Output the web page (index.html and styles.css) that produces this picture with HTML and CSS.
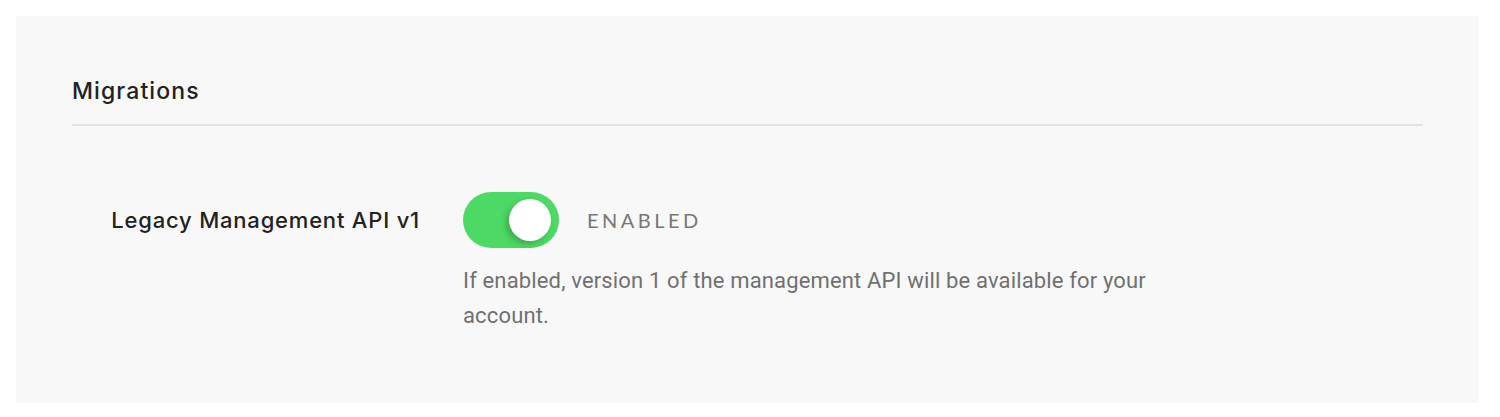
FILE: index.html
```
<!DOCTYPE html>
<html lang="en">
<head>
<meta charset="utf-8">
<title>Migrations</title>
<link rel="stylesheet" href="styles.css">
</head>
<body>
<section class="panel">
  <h2 class="panel-title">Migrations</h2>
  <div class="setting">
    <div class="setting-label">Legacy Management API v1</div>
    <div class="setting-control">
      <div class="toggle-row">
        <span class="toggle is-on" role="switch" aria-checked="true"><span class="toggle-knob"></span></span>
        <span class="toggle-state">ENABLED</span>
      </div>
      <p class="setting-help">If enabled, version 1 of the management API will be available for your account.</p>
    </div>
  </div>
</section>
</body>
</html>
```

FILE: styles.css
```
html, body {
  margin: 0;
  padding: 0;
  background: #ffffff;
}

body {
  padding: 16px 21px 14px 16px;
  font-family: Inter, "Open Sans", sans-serif;
}

.panel {
  background: #f8f8f8;
  padding: 60px 56px 81px 56px;
  height: 387px;
  box-sizing: border-box;
}

.panel-title {
  margin: 0;
  font-size: 23px;
  font-weight: 500;
  letter-spacing: 1.1px;
  color: #222222;
  line-height: 30px;
  padding-bottom: 18px;
  border-bottom: 2px solid #e2e2e2;
}

.setting {
  display: grid;
  grid-template-columns: 348px 1fr;
  column-gap: 43px;
  margin-top: 66px;
}

.setting-label {
  text-align: right;
  font-size: 22px;
  font-weight: 500;
  letter-spacing: 0.8px;
  color: #222222;
  line-height: 56px;
}

.toggle-row {
  display: flex;
  align-items: center;
  gap: 28px;
}

.toggle {
  display: flex;
  align-items: center;
  justify-content: flex-end;
  width: 96px;
  height: 56px;
  border-radius: 28px;
  background: #4cd964;
  box-sizing: border-box;
  padding-right: 8px;
}

.toggle-knob {
  width: 42px;
  height: 42px;
  border-radius: 50%;
  background: #ffffff;
  box-shadow: -3px 3px 6px rgba(0, 0, 0, 0.22);
}

.toggle-state {
  font-family: Lato, sans-serif;
  font-size: 20px;
  letter-spacing: 3.5px;
  color: #777777;
}

.setting-help {
  margin: 15px 0 0 0;
  max-width: 710px;
  font-family: Roboto, sans-serif;
  font-size: 22px;
  letter-spacing: 0.15px;
  line-height: 35px;
  color: #707070;
}
```
